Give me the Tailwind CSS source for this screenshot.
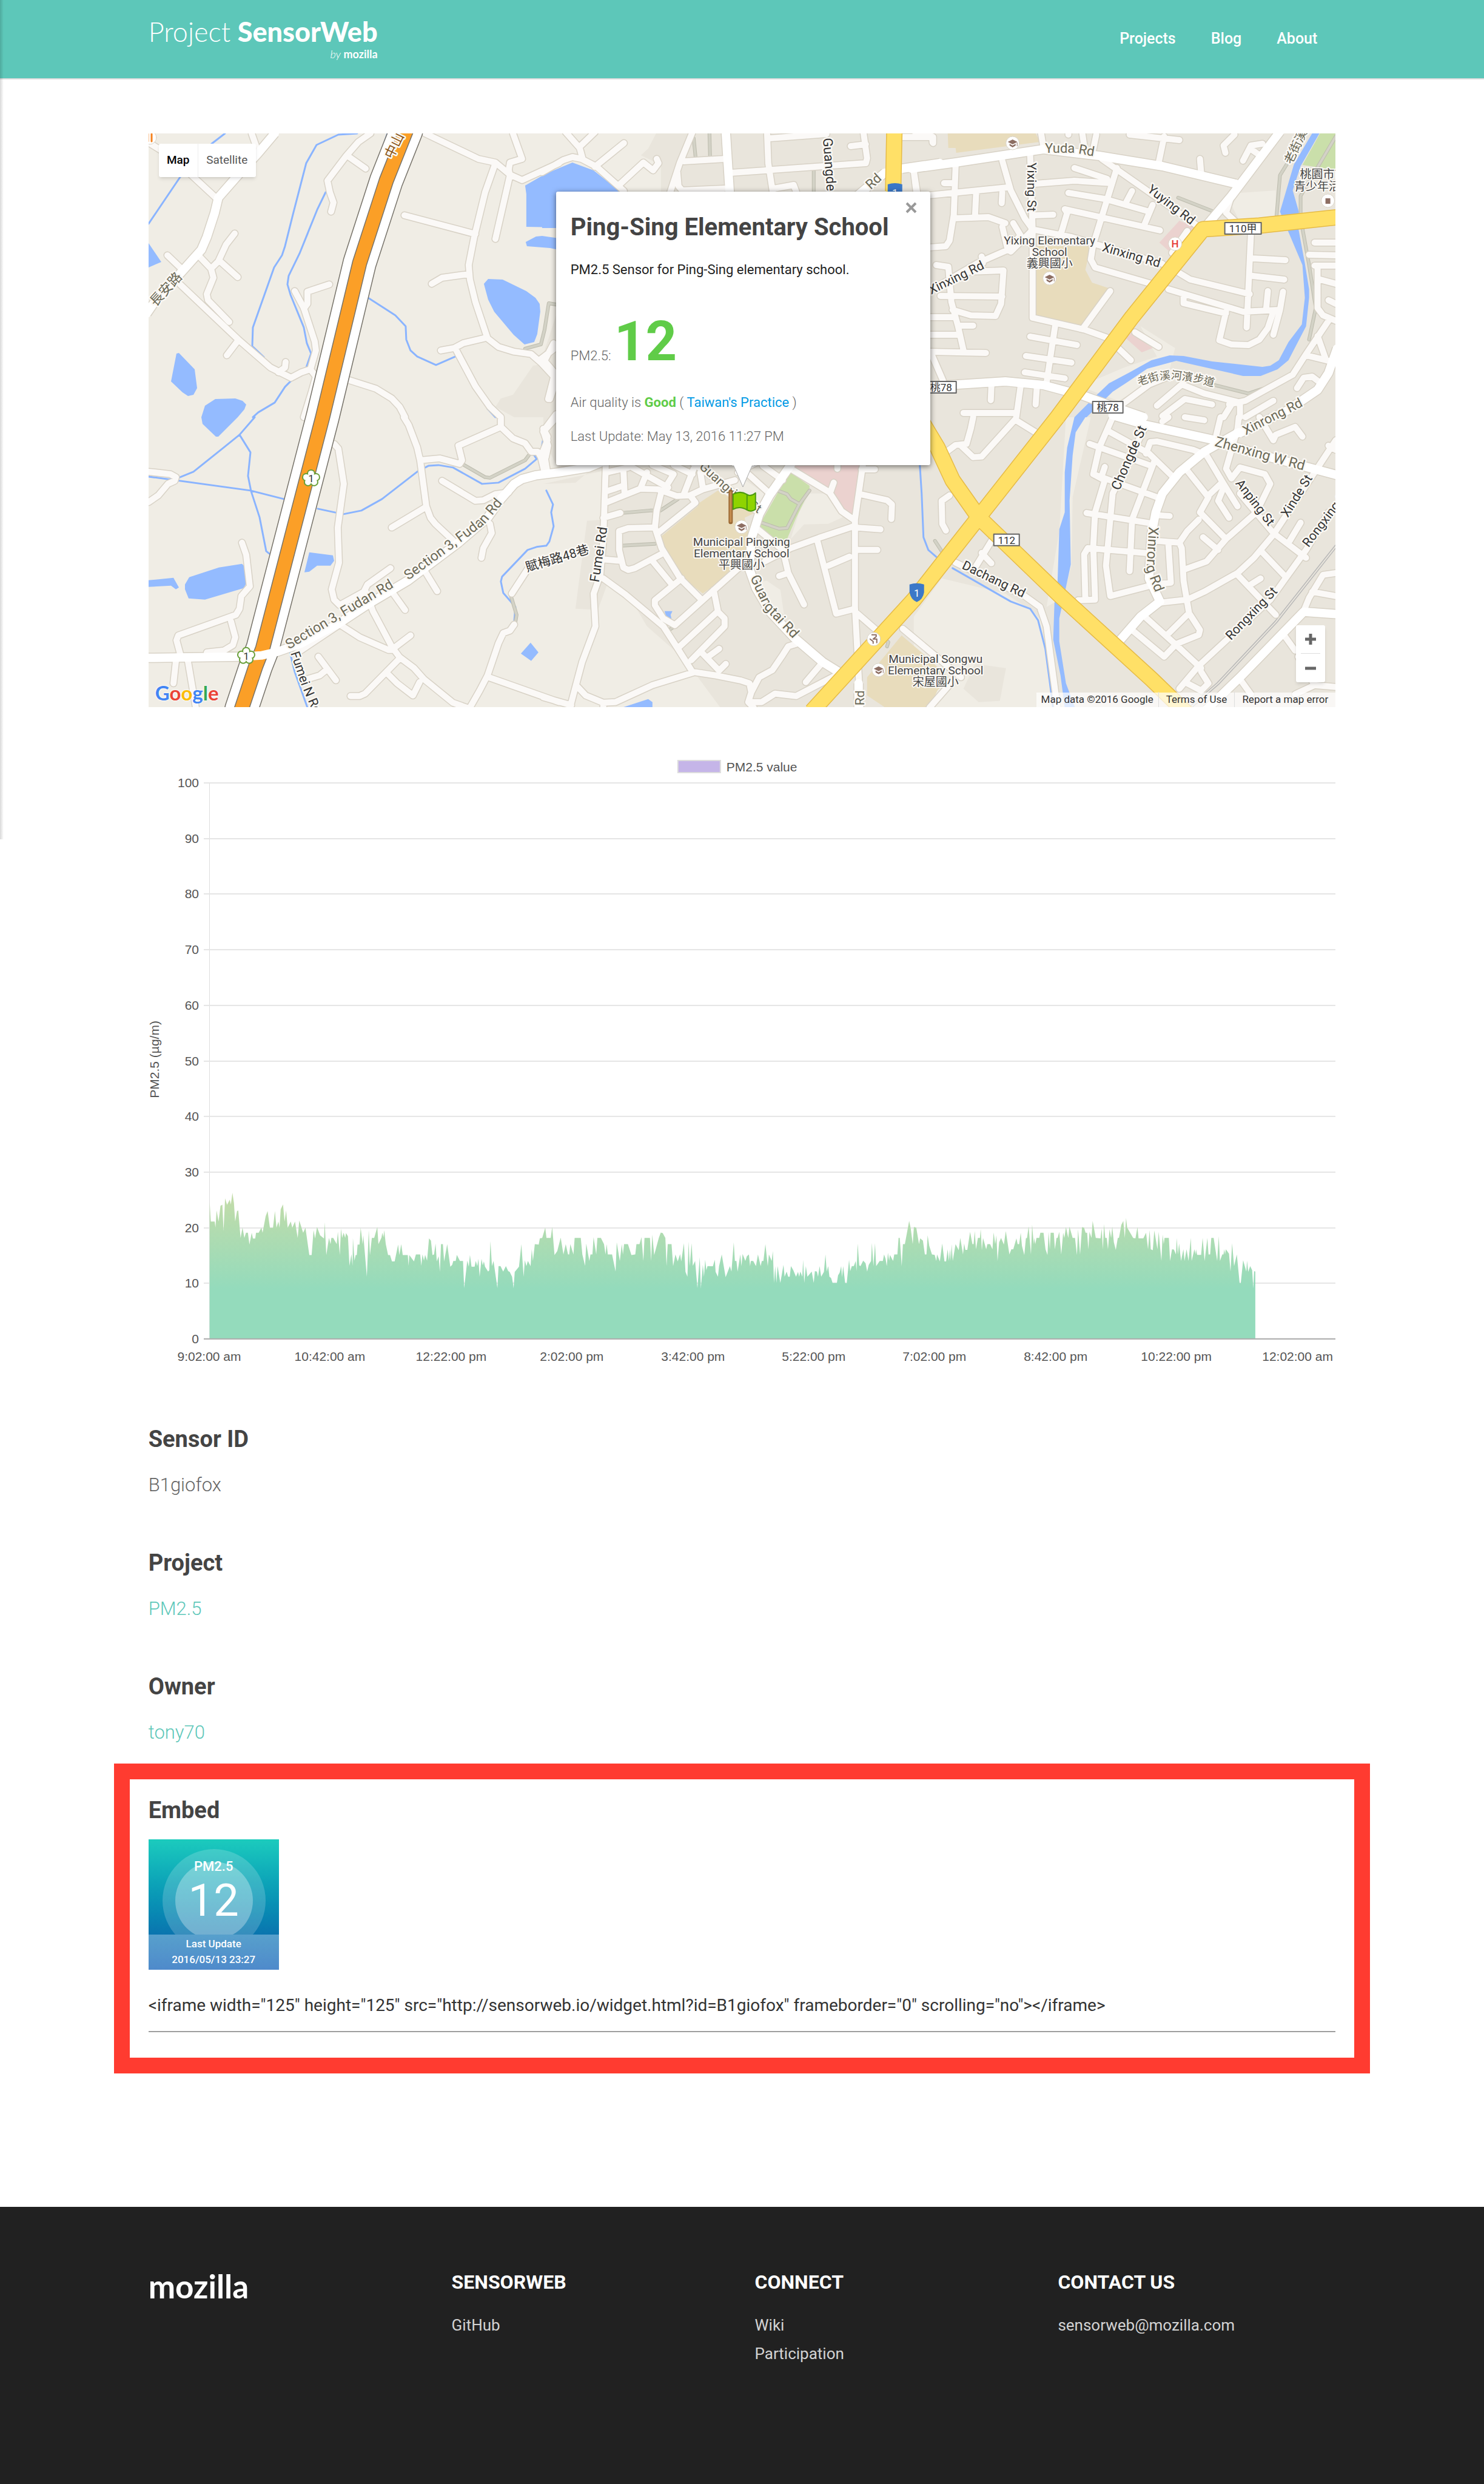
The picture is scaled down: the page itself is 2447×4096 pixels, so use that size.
<!DOCTYPE html>
<html lang="en">
<head>
<meta charset="utf-8">
<meta name="viewport" content="width=device-width, initial-scale=1">
<title>Ping-Sing Elementary School - Project SensorWeb</title>
<script src="https://cdn.jsdelivr.net/npm/@tailwindcss/browser@4"></script>
</head>
<body class="relative flex min-h-screen flex-col bg-white font-['Roboto','Noto_Sans_CJK_TC',sans-serif] text-[#444]">
<div class="absolute top-0 left-0 z-10 h-[1384px] w-1.5 bg-linear-to-r from-black/15 to-transparent" aria-hidden="true"></div>

<header class="border-b-2 border-[#dcdcdc] bg-[#5dc7b9] text-white">
  <div class="mx-auto flex h-[129px] w-4/5 items-start justify-between">
    <a href="#" class="flex flex-col items-end pt-6 font-['Lato',sans-serif]">
      <span class="text-[45px] leading-[56px]"><span class="font-light">Project</span> <span class="font-black">SensorWeb</span></span>
      <span class="text-[18px] leading-[18px]"><i class="font-light">by</i> <b>mozilla</b></span>
    </a>
    <nav class="flex gap-[58px] pt-11 pr-[30px] text-[25px] leading-10 font-medium">
      <a href="#">Projects</a>
      <a href="#">Blog</a>
      <a href="#">About</a>
    </nav>
  </div>
</header>

<main class="mx-auto w-4/5 pt-[89px]">
  <section class="relative overflow-hidden" aria-label="Map">
    <svg id="map" class="block h-auto w-full bg-[#f0ede5] font-['Roboto','Noto_Sans_CJK_TC',sans-serif]" viewBox="0 0 1958 946" fill="none" stroke-linejoin="round" stroke-linecap="round"></svg>

    <div class="absolute top-[17px] left-[17px] flex h-[55px] rounded-[3px] bg-white text-[19px] shadow-md">
      <button class="w-[65px] border-r border-[#eee] font-medium text-black">Map</button>
      <button class="w-[95px] text-[#565656]">Satellite</button>
    </div>

    <div class="absolute top-[96px] left-[672px] h-[451px] w-[617px] rounded-[3px] bg-white px-6 shadow-[0_2px_10px_rgba(0,0,0,0.55)]">
      <button aria-label="Close" class="absolute top-[17px] right-[22px]">
        <svg class="size-[19px]" viewBox="0 0 19 19" fill="none" stroke="#999" stroke-width="4"><path d="M2 2 17 17M17 2 2 17"/></svg>
      </button>
      <h1 class="pt-[34px] text-[40px] leading-[50px] font-bold">Ping-Sing Elementary School</h1>
      <p class="mt-[29px] text-[22px] leading-8 text-[#222]">PM2.5 Sensor for Ping-Sing elementary school.</p>
      <p class="mt-[50px] text-[22px] leading-[106px] font-light text-[#666]">PM2.5: <strong class="text-[90px] font-bold text-[#60cc48]">12</strong></p>
      <p class="mt-2 text-[22px] leading-8 font-light text-[#666]">Air quality is <b class="font-bold text-[#60cc48]">Good</b> ( <a href="#" class="font-normal text-[#039be5]">Taiwan's Practice</a> )</p>
      <p class="mt-6 text-[22px] leading-8 font-light text-[#666]">Last Update: May 13, 2016 11:27 PM</p>
      <svg class="absolute top-[450px] left-[290px] h-[40px] w-9" viewBox="0 0 36 40"><path d="M2 0 18 37 34 0z" fill="#fff" stroke="#aaa"/><path d="M0 0H36" stroke="#fff" stroke-width="3"/></svg>
    </div>

    <div class="absolute right-[17px] bottom-[41px] flex h-[94px] w-12 flex-col items-center rounded-[3px] bg-white shadow-md">
      <button aria-label="Zoom in" class="flex flex-1 items-center"><svg class="size-[18px]" viewBox="0 0 18 18" stroke="#666" stroke-width="5"><path d="M0 9H18M9 0V18"/></svg></button>
      <div class="h-px w-8 bg-[#ddd]"></div>
      <button aria-label="Zoom out" class="flex flex-1 items-center"><svg class="size-[18px]" viewBox="0 0 18 18" stroke="#666" stroke-width="5"><path d="M0 9H18"/></svg></button>
    </div>

    <div class="absolute right-0 bottom-0 flex h-6 items-center bg-white/70 text-[17px] text-[#333]">
      <span class="px-2">Map data ©2016 Google</span>
      <a href="#" class="border-l border-[#ddd] px-3">Terms of Use</a>
      <a href="#" class="border-l border-[#ddd] px-3">Report a map error</a>
    </div>
    <div class="absolute bottom-0 left-[11px] font-['Lato',sans-serif] text-[33px] leading-[48px] font-bold [text-shadow:0_0_3px_white,0_0_3px_white]"><span class="text-[#4285f4]">G</span><span class="text-[#ea4335]">o</span><span class="text-[#fbbc05]">o</span><span class="text-[#4285f4]">g</span><span class="text-[#34a853]">l</span><span class="text-[#ea4335]">e</span></div>
  </section>

  <svg id="chart" class="mt-[74px] block h-auto w-full font-['Liberation_Sans',sans-serif] text-[21px]" viewBox="0 0 1958 1020" fill="#555" role="img" aria-label="PM2.5 value by time"></svg>

  <section class="mt-[88px]">
    <h2 class="text-[38px] leading-[50px] font-bold">Sensor ID</h2>
    <p class="mt-[29px] text-[31px] leading-[44px] font-light text-[#666]">B1giofox</p>
  </section>
  <section class="mt-[81px]">
    <h2 class="text-[38px] leading-[50px] font-bold">Project</h2>
    <p class="mt-[29px] text-[31px] leading-[44px] font-light"><a href="#" class="text-[#5dc7b9]">PM2.5</a></p>
  </section>
  <section class="mt-[81px]">
    <h2 class="text-[38px] leading-[50px] font-bold">Owner</h2>
    <p class="mt-[29px] text-[31px] leading-[44px] font-light"><a href="#" class="text-[#5dc7b9]">tony70</a></p>
  </section>

  <section class="-mx-[57px] mt-[29px] border-[26px] border-[#ff3b30] px-[31px] pt-[26px] pb-[42px]">
    <h2 class="text-[38px] leading-[50px] font-bold"><label for="embed">Embed</label></h2>
    <div class="relative mt-[23px] flex size-[215px] flex-col items-center overflow-hidden bg-linear-to-b from-[#1ccbbd] to-[#0b72ae] to-75% text-white">
      <svg class="absolute inset-0 size-full" viewBox="0 0 215 215"><circle cx="108" cy="101" r="85" fill="#fff" fill-opacity=".18"/><circle cx="108" cy="101" r="64" fill="#fff" fill-opacity=".3"/></svg>
      <span class="relative pt-[31px] text-[22px] leading-7 font-medium">PM2.5</span>
      <span class="relative text-[74px] leading-[84px]">12</span>
      <p class="absolute inset-x-0 bottom-0 h-[58px] bg-linear-to-b from-[#57a0cc] to-[#4f8acb] pt-[2px] text-center text-[17px] leading-[26px] font-medium">Last Update<br>2016/05/13 23:27</p>
    </div>
    <input id="embed" readonly class="mt-[17px] block h-[86px] w-full border-b-2 border-[#9e9e9e] text-[28px] text-[#333] outline-none" value="&lt;iframe width=&quot;125&quot; height=&quot;125&quot; src=&quot;http://sensorweb.io/widget.html?id=B1giofox&quot; frameborder=&quot;0&quot; scrolling=&quot;no&quot;&gt;&lt;/iframe&gt;">
  </section>
</main>

<footer class="mt-[220px] flex-1 bg-[#212121] pt-[104px] text-[#d3d3d3]">
  <div class="mx-auto grid w-4/5 grid-cols-4 gap-[42px] text-[26px] leading-[47px]">
    <a href="#" class="font-['Lato',sans-serif] text-[53px] leading-[54px] font-bold text-white">mozilla</a>
    <div>
      <h3 class="mb-7 text-[32px] leading-10 font-bold text-white">SENSORWEB</h3>
      <a href="#">GitHub</a>
    </div>
    <div>
      <h3 class="mb-7 text-[32px] leading-10 font-bold text-white">CONNECT</h3>
      <ul><li><a href="#">Wiki</a></li><li><a href="#">Participation</a></li></ul>
    </div>
    <div>
      <h3 class="mb-7 text-[32px] leading-10 font-bold text-white">CONTACT US</h3>
      <a href="#">sensorweb@mozilla.com</a>
    </div>
  </div>
</footer>

<script>
const K = 0.861;
const pairs = s => s.trim().split(/\s+/).map(p => p.split(',').map(Number));
// Map sheets: origin and cells per unit, so each part of town is digitised on its own grid.
const sheets = {
  A: [270, 240, 1.96, 2.8], B: [270, 800, 1.96, 2.751], C: [1040, 800, 1.96, 2.751],
  P: [1040, 340, 2.063, 2.8], T: [1040, 250, 2.063, 3], E: [1750, 240, 1.889, 2.8], D: [1750, 800, 1.889, 2.751]
};
const at = (s, [x, y]) => { const [ox, oy, sx, sy] = sheets[s]; return [Math.round((ox + x / sx - 284) * K), Math.round((oy + y / sy - 256) * K)]; };
const line = (s, str) => 'M' + pairs(str).map(p => at(s, p).join(' ')).join('L');
const lines = o => Object.entries(o).map(([s, l]) => l.split('|').map(t => line(s, t)).join('')).join('');
const areas = (o, fill) => `<path d="${Object.entries(o).map(([s, l]) => l.split('|').map(t => line(s, t) + 'Z').join('')).join('')}" fill="${fill}"/>`;
const strokes = (d, color, w, cap = 'round') => `<path d="${d}" stroke="${color}" stroke-width="${w}" stroke-linecap="${cap}"/>`;

const urban = { A: '1470,1290 1568,1270 1568,1568 1400,1568 1330,1510 1350,1465 1395,1445',
  P: '0,950 60,700 520,200 465,0 1568,0 1568,1568 60,1568 0,1400',
  T: '445,18 1568,18 1568,390 465,390 465,200 385,145 415,105',
  C: '0,350 120,345 200,250 1568,250 1568,1528 665,1528 580,1370 500,1240 390,1100 330,960 240,885 205,1015 120,1010 165,545 228,540 228,280',
  E: '-60,45 1530,45 1530,1568 -60,1568', D: '-60,0 1530,0 1530,1528 -60,1528' };
const rural = { C: '1000,400 1070,400 1150,500 1120,530 1070,560 980,565 930,640 960,500|790,870 840,860 890,910 905,1040 830,960|670,380 750,320 830,400 800,500 750,530',
  E: '1180,365 1310,350 1310,500 1180,520 1150,430|820,1080 945,1195 925,1310 840,1390 740,1480 600,1400 760,1300 880,1240',
  D: '0,1050 100,850 330,930 430,1020 460,1070 500,1528 0,1528|550,0 640,0 575,420 570,780 540,950 480,1000 525,600' };
const tan = { C: '655,385 800,500 755,530 770,600 770,760 735,790 600,930 515,835 440,655 440,630 580,470 580,455|1345,1150 1440,1260 1520,1370 1480,1440 1450,1528 1285,1528 1215,1465 1215,1370',
  E: '122,45 440,45 455,90 152,148 150,122 125,122|445,650 640,650 620,775 645,845 703,875 605,1083 440,1028' };
const green = { C: '930,290 1000,360 1000,385 950,530 915,640 900,700 870,690 805,580 880,400', E: '1470,45 1526,45 1526,240 1405,215' };
const pink = { C: '940,255 1200,250 1185,290 1160,510 1120,480 1070,390 1000,310', E: '960,512 1020,550 925,680 888,630|785,1115 865,1195 825,1220 765,1140' };
const lakes = { A: '27,635 75,735 27,765|132,1225 142,1222 200,1310 210,1410 195,1448 175,1452 155,1435 112,1375|225,1568 240,1505 278,1470 352,1465 380,1480 395,1500 388,1525 362,1568 290,1670 280,1670 230,1603|1440,325 1500,275 1568,235 1568,550 1445,545 1445,370|1443,628 1482,597 1505,594 1600,615 1600,680 1535,660 1447,650|1303,826 1358,828 1445,890 1480,925 1495,960 1498,1000 1487,1120 1475,1165 1438,1175 1398,1125 1325,1000 1302,935 1287,852',
  T: '-5,257 115,185 200,230 320,370 320,560 -5,560',
  B: '630,712 720,728 725,755 710,782 660,782 630,812 612,816|180,842 292,790 378,772 385,780 393,875 385,900 240,960 178,955 165,905 165,880|27,858 120,844 142,898 130,905 112,887 27,895|1462,1188 1491,1240 1463,1284 1425,1244',
  C: '455,1020 485,1022 478,1040 482,1068 460,1045|295,1528 395,1485 410,1500 410,1528',
  E: '1440,45 1375,210 1325,465 1350,560 1405,750 1415,925 1403,1070 1355,1165 1320,1260 1290,1290 1260,1297 1080,1268 975,1238 925,1236 860,1262 780,1325 705,1385 660,1450 580,1568 625,1568 720,1430 770,1380 845,1305 950,1265 1190,1347 1255,1347 1315,1310 1355,1260 1418,1080 1430,925 1430,880 1415,740 1390,550 1393,465 1370,350 1400,220 1467,45',
  D: '580,0 555,160 545,290 545,500 525,590 520,880 508,980 505,1170 530,1360 545,1528 583,1528 550,1400 525,1180 527,1060 567,775 563,440 575,200 585,80 620,0' };
const streams = { A: '315,45 265,100 145,280 27,530|810,45 740,50 657,108 620,205 570,480 540,650 528,700 498,765 418,1085 416,1185 460,1245|925,45 880,220 840,400 765,770|693,360 660,455 595,690 553,810 549,855 560,910 610,1085 622,1170 637,1225 620,1300 560,1375 540,1405 502,1490 440,1540 420,1568|852,925 955,1020 992,1080 995,1150 1010,1210 1035,1240 1107,1288 1180,1240|1300,1520 1330,1568',
  B: '425,0 370,90 310,160 195,285 135,320|27,313 410,385 535,430|370,90 410,185 401,310 412,390 445,525 468,705 480,718|663,480 758,510 827,490 905,430 1035,285 1080,255 1115,250 1170,265 1280,350 1340,343 1440,270 1485,220 1470,190|1510,110 1503,165|1520,385 1545,460 1540,500 1549,575 1533,655 1520,677 1485,683 1450,697 1355,840 1350,865 1360,925 1405,1000 1400,1075|558,1235 575,1340 625,1528',
  C: '1413,250 1420,400 1428,630 1445,700 1480,740', D: '140,795 350,970 420,1010 450,1070 475,1220 505,1528' };
const minor = { A: '27,95 100,160 190,270 285,395|415,45 430,110|860,45 815,90 770,165 700,300 707,360 722,415 712,465|775,165 842,235|98,700 150,770|215,700 262,770 290,730 318,640 350,580|295,730 362,815|262,770 270,820 245,905 250,940 330,1055|145,855 365,1150 485,1300 563,1355 600,1325 635,1310 655,1210 652,1160 610,980 577,890|365,1155 320,1235|515,1325 540,1300 542,1270|705,855 625,895 623,960 610,985|635,1310 655,1350 640,1430 610,1568|1065,45 1265,180 1330,200 1385,265 1430,295 1568,205|1395,45 1430,180 1385,200 1380,240 1385,270 1330,610|1330,205 1290,360 1250,600 1230,750 1235,830 1255,950 1300,1145 1340,1190 1400,1215 1465,1230 1500,1275 1560,1365 1535,1470|987,485 1255,585|1230,800 1130,820 1090,850|1295,1140 1210,1170 1175,1195 1125,1210|1180,1200 1255,1400 1310,1510 1350,1568|775,1365 880,1415 940,1465 970,1510 990,1568|1500,1255 1568,1180',
  T: '-5,240 80,172 115,155 150,165 210,210 320,350|90,10 143,100 155,165|205,10 143,95|205,210 318,75|300,315 395,185 435,232 455,190 448,165|590,10 540,190 500,360|555,178 720,165|530,240 535,320 550,345 715,335|740,245 1275,190 1280,160 1265,10|885,10 890,190 910,390|895,45 1120,22|1215,90 1275,80|910,335 990,315 1010,390|1418,40 1540,40 1540,75|1465,230 1480,390',
  B: '27,285 110,298 130,315 125,335 100,350 65,410 27,445|725,140 740,165 760,350 737,580 742,765 715,905 725,960 745,990 835,920 850,880 935,795|377,660 395,725 407,890 375,940 370,1010 355,1040 140,1150 133,1175 145,1245|338,1075 352,1160 345,1200 310,1230 245,1240|120,1400 130,1285|175,1285 205,1528|985,0 1005,40 1035,160 1048,230 1070,470 1085,530 1105,560 1180,660|1048,225 1120,215 1195,245 1205,225 1190,150 1350,50 1395,110 1440,135 1465,180 1490,180 1500,210 1515,290|1350,50 1350,0|1560,0 1510,75 1525,120 1500,205|1130,335 1255,440 1285,435 1330,405 1380,395|1065,475 940,580|1310,560 1315,610 1285,690 1278,740|1060,800 1110,915|945,925 990,1015|840,910 870,1020 945,1220 1010,1150|750,1095 820,1160 930,1225 950,1225 970,1265 1025,1320 1060,1380 1170,1505 1235,1535|970,1270 840,1455 820,1467 785,1468|925,1350 960,1400 1020,1465 1045,1395|665,1260 730,1385|695,1330 670,1360 625,1380|580,1245 745,1090|1455,790 1390,930|1400,1090 1385,1125 1360,1135 1340,1190 1300,1360 1270,1440 1235,1528|1305,1370 1568,1500',
  P: '40,890 5,985 45,1050 20,1190|50,1270 0,1360 20,1440 10,1500',
  C: '0,60 15,100 5,200 15,300|235,250 225,640 215,830 190,930 195,1100 145,1290 120,1420 100,1528|235,450 365,375 430,378 500,415 550,410 600,380 720,330|300,270 305,400|240,390 300,360|240,290 320,265|330,260 470,370|390,290 365,375|455,375 490,300 410,250|565,270 525,410|490,250 560,300|590,290 600,370|445,390 425,490 420,580 445,690 515,850 595,960|550,410 572,450 430,610|225,530 290,505|420,580 320,585 285,600 285,700 300,790 320,805 345,795 450,715|235,750 290,755|410,755 485,885|520,850 420,965 420,990 450,1060 495,1095 650,900 735,790|225,850 310,935 450,1100 500,1210 560,1340 650,1360 740,1385 775,1400 780,1450 770,1500 790,1528|565,1345 410,1410 270,1500 225,1505 160,1465 125,1415|0,1475 105,1515|225,1505 225,1528|640,910 655,1020 510,1210|655,1025 680,1060 680,1100 555,1280|600,1245 660,1335 685,1300|620,1260 660,1220|770,1500 820,1500 870,1455 930,1465 950,1470 1110,1350|780,1450 810,1370 860,1330 900,1250 920,1205 950,1195|1050,1290 985,1395|560,240 700,380 800,490|770,300 840,390|825,255 900,330|730,290 800,240|930,270 1075,395 1120,495 1165,540|1105,250 1105,270|1090,345 1080,390|1200,250 1170,540 1170,1000 1190,1528|1195,275 1245,275|1190,405 1290,435 1310,460 1307,535|1175,580 1265,590|1175,700 1255,700|1165,575 1035,635 930,690 830,760|805,590 900,700 920,820 980,985|920,820 885,835|1030,650 1100,1035 1170,1010|1070,780 1150,735|1180,1035 1265,1140|1350,1115 1568,1370|1450,1528 1530,1400',
  E: '57,375 340,335|0,62 65,60 67,95|0,250 8,355|150,220 145,480 130,620 115,650 57,655|110,310 145,310|225,355 222,490|145,500 270,495 330,525|320,190 350,350 400,500 430,560|320,360 318,420|460,45 470,120|610,45 615,110|558,50 558,40|660,50 650,130|420,165 430,560 430,1035 620,1100 700,1140|440,485 505,480|425,560 570,600 900,745|545,450 890,565|545,450 555,470 530,590|440,315 580,300 715,310|580,230 700,290|735,230 650,640 640,720 655,765 860,850|560,365 690,395 845,460|790,355 770,410|865,430 835,530|680,180 1025,540|780,50 960,80|905,60 885,200|1160,50 1120,110 1128,150|1260,100 1220,110 1190,190|1220,130 1255,165|1035,180 1040,260|1145,400 1130,470 1165,520|1220,590 1205,1085|1225,715 1345,725|1225,810 1340,828|955,790 1000,830 1215,905|920,880 1190,1000 1320,990|975,910 975,955 1130,1010|1280,890 1275,990|1335,895 1325,990 1300,1125|1130,1000 1105,1155 1150,1175 1210,1180 1250,1150 1280,1090 1300,1000|360,525 385,590 340,670 230,740 57,890|320,545 340,670|425,570 350,680|990,570 935,685|80,750 125,760 135,950 160,1080 180,1210|245,705 250,740|200,785 325,780 315,960 295,1025 205,1020 140,990|95,915 320,920|57,1030 140,1030|165,1075 215,1075|57,1125 160,1125|57,1215 260,1222|60,1220 105,1370|710,890 610,1095|510,1080 480,1380|420,1135 590,1180|405,1238 570,1275|400,1325 545,1358|280,1400 278,1475|385,1405 370,1568|445,1405 440,1500|180,1545 370,1545|740,1200 785,1260|800,1110 885,1190|1450,630 1526,630|1430,695 1526,700|1450,755 1526,755|1460,755 1460,980 1480,1020 1526,1050|1470,830 1526,850|1500,940 1526,960|1500,1050 1420,1230 1370,1340 1200,1480 1140,1500|1420,1235 1500,1265|1460,1130 1490,1250|1385,1410 1410,1355 1440,1350 1470,1380|880,1505 970,1390 1050,1440 1180,1490 1180,1568|900,1560 980,1470 1080,1500|1150,1500 1120,1568|1300,1480 1200,1568|740,1510 850,1390 920,1350',
  D: '215,0 205,60 190,140 150,145 110,190|170,150 215,210 245,205 365,10 440,80|130,410 100,440 102,560 115,595|285,640 225,780|245,715 280,770|150,765 400,940 455,1000 480,1100 520,1528|720,0 670,160 650,300 690,330 655,500 650,680 655,960 595,965|635,140 850,250|700,70 850,190 935,310|840,40 720,400 695,780 710,940 870,880 930,870 920,670|870,230 790,540 780,810|650,300 885,425|690,260 680,310|625,505 870,560|890,515 925,520|630,690 835,715|630,690 615,720 620,960|840,190 855,130 880,125 1010,170 1060,200 1120,350 1170,470|990,280 1065,420 1035,500 1130,640|1110,350 1065,410|1120,370 1100,440 1140,530|1150,320 1180,265 1270,300 1290,350 1240,500 1130,640 1060,760 980,800|1150,320 1130,270 1170,60 1175,0|1110,0 1095,90|980,0 1050,15|900,20 920,0|1250,0 1300,120 1310,90 1380,50 1405,100|1500,150 1526,170|1526,120 1450,290 1300,620 1230,740 1170,820 1050,920 990,960 890,975|875,650 960,660 970,690 975,860 995,1030 1035,1120 1030,1145 950,1195|960,660 990,600 1030,540|1045,630 1100,700|1180,400 1300,610 1420,740|1400,555 1360,650|1260,710 1345,840|1500,500 1420,700 1345,850 1290,960 1150,1150 1030,1310 960,1430|1170,830 1310,1040|1255,850 1220,880|835,1050 950,1200 1040,1320|995,1030 915,1150|790,1120 905,1260 950,1195|1040,1340 1065,1400 1040,1440 990,1400|1526,820 1480,830 1430,950 1410,1020|1440,920 1526,940|1340,1150 1380,1230|1180,1380 1220,1460|1380,1460 1450,1410 1526,1420|1390,1260 1450,1410' };
const paths = { A: '1440,1200 1500,1175 1515,1100 1530,955 1568,965', B: '1205,245 1290,315 1310,318 1440,225 1455,200|1387,935 1410,1040 1405,1080',
  T: '595,45 602,150|656,18 658,148|1068,232 1068,390',
  C: '295,505 400,490 440,490 505,430|295,675 420,665|880,385 915,405 930,430 960,455|1000,385 960,460 915,585 885,588 820,555|1470,650 1500,715|1265,1150 1295,1185 1290,1205|470,1125 490,1105',
  E: '1370,160 1325,270 1312,500|1526,60 1400,380 1400,500 1430,750 1455,980 1430,1150|1080,1390 1210,1440 1310,1390|955,388 1080,460' };
const major = { A: '500,45 440,150 370,260 290,390 275,470 245,600 225,670 150,790 60,930 20,1010',
  T: '722,10 738,390|1418,220 1568,190|1350,245 1230,390',
  C: '930,250 850,410 810,510 780,640 775,800 800,900 850,1020 940,1160 1050,1290 1140,1370|1185,1400 1185,1528',
  B: '20,1268 380,1262 450,1255 510,1235 600,1190 750,1080 850,985 1000,860 1190,660 1300,530 1350,430 1400,350 1430,325 1480,305 1568,290 1680,265 1740,230',
  E: '-10,232 150,200 470,130 670,165 900,220 1165,315|1325,35 1150,380 1055,545|57,1400 330,1375 470,1395 560,1430|610,1450 760,1530 830,1568|1530,1200 1500,1330 1460,1420 1350,1530 1180,1650',
  D: '720,-10 840,40 1090,120 1240,190 1535,305|1175,80 1050,180 960,290 900,400 875,500 860,620 850,850 890,970 820,1050 745,1175|1535,1037 1410,1025 1180,1370 1060,1540' };
const motorway = { A: '995,30 920,300 820,740 680,1568', B: '680,0 455,1220 430,1310 375,1540' };
const yellow = { T: '1388,5 1383,350', D: '-370,1550 0,960 235,525 520,0|20,0 85,160 140,330 235,525 530,940 860,1380 990,1560', E: '520,1568 790,1030 1045,560 1250,540 1535,493' };

const labels = [
  ['B', '550,1225 850,975 955,890', 'Section 3, Fudan Rd', 23, '#6b6856'], ['B', '1000,860 1180,680 1290,560 1360,450', 'Section 3, Fudan Rd', 23, '#6b6856'],
  ['B', '568,1270 600,1410 640,1540', 'Fumei N Rd', 21, '#333'], ['A', '55,975 155,820', '長安路', 22, '#6b6856'], ['A', '945,180 985,60', '中山', 22, '#8a5417'],
  ['B', '1470,805 1663,725', '賦梅路48巷', 21, '#333'], ['C', '210,860 240,590', 'Fumei Rd', 22, '#333'],
  ['C', '590,275 700,410 800,500', 'Guangxing St', 21, '#6b6856'], ['C', '775,840 830,1010 940,1170', 'Guangtai Rd', 23, '#6b6856'],
  ['T', '1105,35 1120,320 1125,450', 'Guangde St', 22, '#333'], ['T', '1290,350 1345,275', 'Rd', 22, '#6b6856'], ['C', '1205,1520 1205,1435', 'Rd', 21, '#6b6856'],
  ['E', '470,150 580,150 655,168', 'Yuda Rd', 22, '#6b6856'], ['E', '410,200 410,465', 'Yixing St', 21, '#333'], ['E', '840,350 1005,540', 'Yuying Rd', 21, '#333'],
  ['E', '680,675 885,765', 'Xinxing Rd', 21, '#333'], ['E', '65,905 255,770', 'Xinxing Rd', 21, '#333'], ['E', '820,1395 880,1368 940,1362 1010,1376 1080,1402', '老街溪河濱步道', 18, '#6b6856'],
  ['E', '1370,200 1418,50', '老街溪', 20, '#6b6856'], ['E', '1190,1670 1420,1500', 'Xinrong Rd', 22, '#6b6856'],
  ['D', '745,380 840,65', 'Chongde St', 22, '#333'], ['D', '1085,150 1410,280', 'Zhenxing W Rd', 23, '#6b6856'], ['D', '1160,345 1285,580', 'Anping St', 21, '#333'],
  ['D', '1350,535 1445,315', 'Xinde St', 21, '#333'], ['D', '850,570 842,800 875,930', 'Xinrong Rd', 23, '#6b6856'], ['D', '1145,1180 1320,915', 'Rongxing St', 21, '#333'],
  ['D', '1435,675 1570,415', 'Rongxing St', 21, '#333'], ['D', '170,795 395,950', 'Dachang Rd', 21, '#333']
];
const label = ([s, str, text, size, color], i) => {
  const p = pairs(str).map(q => at(s, q)), ext = (a, b) => { const l = Math.hypot(b[0] - a[0], b[1] - a[1]); return [b[0] + (b[0] - a[0]) / l * 60, b[1] + (b[1] - a[1]) / l * 60]; };
  p.unshift(ext(p[1], p[0])); p.push(ext(p[p.length - 2], p[p.length - 1]));
  return `<path id="t${i}" d="M${p.map(q => q.map(Math.round).join(' ')).join('L')}"/><text font-size="${size}" fill="${color}" stroke="#faf8f4" stroke-width="5" paint-order="stroke" text-anchor="middle"><textPath href="#t${i}" startOffset="50%">${text}</textPath></text>`;
};
const block = (s, x, y, rows, step = 23) => { const [X, Y] = at(s, [x, y]); return `<text font-size="19" fill="#444" stroke="#faf8f4" stroke-width="4" paint-order="stroke" text-anchor="middle">${rows.map((r, i) => `<tspan x="${X}" y="${Y + i * step}">${r}</tspan>`).join('')}</text>`; };
const shield = (s, x, y, w, text) => { const [X, Y] = at(s, [x, y]); return `<rect x="${X - w / 2}" y="${Y - 9}" width="${w}" height="19" fill="#fff" stroke="#666" stroke-width="2"/><text x="${X}" y="${Y + 7}" font-size="17" fill="#333" text-anchor="middle">${text}</text>`; };
const poi = (s, x, y, glyph) => { const [X, Y] = at(s, [x, y]); return `<g transform="translate(${X} ${Y})"><circle r="11" fill="#fff" stroke="#d8d2c6"/>${glyph}</g>`; };
const cap = '<path d="M-8-2 0-6 8-2 0 2ZM-5 1 0 4 5 1V4L0 7-5 4ZM7-1H8V5H7Z" fill="#8d6e63"/>';
const flower = (s, x, y) => { const [X, Y] = at(s, [x, y]); const c = [0, 1, 2, 3, 4].map(i => { const a = (i * 72 - 90) * Math.PI / 180; return [Math.round(8 * Math.cos(a)), Math.round(8 * Math.sin(a))]; }); const petals = r => c.map(q => `<circle cx="${q[0]}" cy="${q[1]}" r="${r}"/>`).join(''); return `<g transform="translate(${X} ${Y})"><g fill="#689f38">${petals(7)}</g><g fill="#fff">${petals(5)}<circle r="7"/></g><text y="6" font-size="17" fill="#333" text-anchor="middle">1</text></g>`; };
const blueShield = (s, x, y) => { const [X, Y] = at(s, [x, y]); return `<g transform="translate(${X} ${Y})"><path d="M-12-13Q0-17 12-13V0Q10 12 0 16 -10 12-12 0Z" fill="#3b78c8"/><text y="7" font-size="17" fill="#fff" text-anchor="middle">1</text></g>`; };

const dMinor = lines(minor), dMajor = lines(major), dMotor = lines(motorway), dYellow = lines(yellow), dPath = lines(paths);
const rail = lines({ D: '1526,680 1310,1080 1100,1400 1000,1528' });
const [fx, fy] = at('C', [703, 390]);
document.getElementById('map').innerHTML =
  areas(urban, '#e9e5dc') + areas(rural, '#f0ede5') + areas({ D: '180,1430 235,1500 310,1495 333,1320 220,1300' }, '#e9e5dc') + areas(tan, '#e8dcbc') + areas(green, '#cadfaa') + areas(pink, '#ebd2cf') +
  areas(lakes, '#94bbff') + strokes(lines(streams), '#8ab4ff', 3) +
  strokes(dPath, '#bdbcae', 6) + strokes(dPath, '#d3d2c6', 4) + strokes(rail, '#b8b8b8', 5) + strokes(rail, '#e9e5dc', 2) +
  strokes(dMinor, '#d8d2c6', 13) + strokes(dMajor, '#d8d2c6', 17, 'butt') + strokes(dMinor, '#fbf9f7', 10) +
  strokes(dMotor, '#77736a', 56) + strokes(dMotor, '#fff', 53) + strokes(dMotor, '#77736a', 25) + strokes(dMotor, '#fb9f27', 22) +
  strokes(dMajor, '#fff', 14) + strokes(dYellow, '#e6bb47', 27, 'butt') + strokes(dYellow, '#ffe067', 24) +
  labels.map(label).join('') +
  block('C', 745, 675, ['Municipal Pingxing', 'Elementary School', '平興國小'], 19) + block('C', 1474, 1292, ['Municipal Songwu', 'Elementary School', '宋屋國小'], 19) +
  block('E', 490, 640, ['Yixing Elementary', 'School', '義興國小'], 19) + block('E', 1480, 285, ['桃園市市', '青少年活動'], 20) +
  shield('E', 1190, 552, 60, '110甲') + shield('E', 98, 1403, 50, '桃78') + shield('E', 701, 1510, 50, '桃78') + shield('D', 335, 645, 42, '112') +
  flower('B', 637, 320) + flower('B', 394, 1258) + blueShield('C', 1403, 922) + blueShield('T', 1390, 355) +
  poi('C', 745, 578, cap) + poi('C', 1260, 1332, cap) + poi('E', 490, 822, cap) + poi('E', 357, 98, cap) +
  poi('C', 1240, 1168, '<path d="M-3-7H4V-4L-1 0H5V6M-6 0-1 4V7" stroke="#8d6e63" stroke-width="2"/>') +
  poi('E', 946, 637, '<text y="6" font-size="17" font-weight="500" fill="#e53935" text-anchor="middle">H</text>') + poi('E', 1498, 406, '<path d="M-4-4H4V5H-4Z" fill="#8d6e63"/>') +
  poi('A', 33, 68, '<path d="M-3-6V6M3-6V6" stroke="#f5821f" stroke-width="3"/>') +
  `<g transform="translate(${fx} ${fy})"><path d="M0 1V51" stroke="#9c6a35" stroke-width="7"/><path d="M0 2V50" stroke="#c68d4f" stroke-width="3"/><path d="M4 5Q16-1 26 5 32 10 41 3V30Q34 35 27 31 15 24 4 30Z" fill="#8fd400" stroke="#4c9a12" stroke-width="2"/><path d="M27 6V30" stroke="#4c9a12" stroke-width="2"/></g>`;

// Chart
const early = '177,250 180,360 190,360 192,395 195,297 200,360 205,270 210,264 213,415 217,227 222,265 229,235 232,262 236,195 240,255 243,360 248,300 251,297 257,455 262,395 267,455 271,425 276,425 280,493 286,425 289,458 295,458 297,425 304,425 311,395 314,425 322,330 327,300 333,396 341,396 346,300 350,396 355,360 358,396 361,290 367,262 371,360 375,297 379,396 387,360 391,396 398,360 405,455 409,354 419,425 425,396 435,553 441,553 446,410 450,458 455,392 463,440 473,458 475,365 479,553 486,455 490,490 492,455 497,455 506,490 509,420 514,553 517,400 520,455 524,425 528,455 530,427 535,445 539,615 544,548 547,615 548,455 552,585 555,553 558,553 560,493 565,493 568,395 573,490 575,440 584,678 589,410 592,553 597,455 603,455 611,392 614,490 622,452 624,425 627,450 629,410 633,490 639,553 644,553 649,590 656,590 665,493 668,553 673,490 677,553 690,553 692,615 694,553 706,590 711,550 722,550 725,615 728,550 732,585 735,552 740,585 745,457 750,470 754,553 758,550 762,487 765,590 770,560 773,650 776,490 781,490 784,590 792,490 800,620 805,610 808,587 814,587 817,552 825,587 833,587 836,743 844,585 848,620 851,552 855,620 863,620 866,587 870,617 873,575 876,678 881,575 884,612 887,590 890,620 898,648 901,640 904,473 908,617 912,587 922,743 925,617 930,617 937,648 944,617 950,645 954,650 960,678 964,743 967,650 978,620 984,490 990,678 993,583 997,617 1001,587 1008,617 1011,520 1014,587 1019,490 1029,493 1032,457 1038,455 1046,395 1049,455 1060,455 1064,392 1070,553 1077,530 1086,453 1093,550 1099,490 1105,550 1108,550 1111,490 1119,550 1122,455 1138,455 1142,550 1149,615 1152,487 1160,587 1163,550 1168,550 1171,450 1178,550 1181,455 1190,455 1198,490 1202,550 1205,490 1208,550 1219,550 1228,648 1231,480 1239,587 1244,490 1247,550 1250,490 1260,490 1269,553 1279,550 1282,490 1290,490 1295,450 1300,587 1303,455 1317,455 1320,587 1323,435 1328,553 1340,455 1345,424 1350,427 1357,455 1360,617 1363,490 1373,490 1377,617 1383,550 1389,590 1395,548 1398,590 1405,485 1409,650 1414,678 1417,475 1420,617 1425,485 1428,615 1434,587 1440,743 1446,565 1449,743 1454,610 1457,678 1460,580 1463,640 1466,617 1480,618 1485,580 1487,650 1493,678 1496,617 1503,550 1513,680 1520,640 1524,617 1528,648 1534,480 1537,587 1541,587 1544,648 1551,550 1554,617 1557,547 1564,587 1568,560';
const late = '45,550 48,617 50,587 56,587 63,617 68,550 75,617 78,587 82,587 87,490 93,617 96,550 103,587 106,530 109,713 112,617 115,713 118,617 125,713 133,610 136,678 141,648 145,678 149,678 152,617 158,640 165,678 170,650 173,678 176,648 181,678 183,580 186,713 190,617 194,678 205,648 210,713 213,645 218,648 221,678 225,617 229,678 236,650 240,550 243,648 247,617 250,678 254,685 258,713 269,713 272,670 276,655 280,617 282,680 285,617 290,713 294,715 300,580 303,645 307,617 312,617 317,587 319,645 322,487 326,612 329,617 336,585 342,600 346,648 350,610 356,587 358,483 362,617 366,485 369,617 378,587 386,587 389,550 393,575 396,617 399,540 402,585 404,552 412,587 415,550 423,550 426,455 429,455 434,617 437,490 442,490 447,430 453,357 457,400 462,490 465,392 471,395 478,490 481,457 488,470 493,550 497,550 500,440 504,500 511,550 518,552 522,587 524,550 531,590 537,487 543,590 547,590 551,520 554,587 557,520 559,587 561,490 564,587 571,490 579,525 583,455 590,550 593,487 596,523 601,523 608,420 614,490 617,490 620,415 623,520 628,455 633,455 635,403 638,525 641,455 649,520 652,490 659,490 665,520 668,423 672,490 675,440 678,587 682,480 687,455 694,493 699,415 708,550 713,520 718,520 726,457 729,490 733,490 737,425 740,500 746,553 750,457 753,455 757,388 763,550 766,378 770,490 771,455 774,490 777,455 784,455 787,425 795,425 800,520 805,553 808,420 811,520 813,425 821,425 824,520 828,455 831,455 835,420 840,550 845,425 848,455 852,392 858,455 861,390 869,455 875,455 880,553 883,405 888,550 893,393 898,395 902,425 906,425 909,520 912,420 917,455 920,357 928,455 940,457 943,400 946,520 949,375 952,455 956,455 959,520 963,405 967,455 970,390 974,480 979,523 984,455 987,455 993,380 998,357 1002,455 1005,340 1008,395 1023,455 1029,457 1034,393 1037,457 1049,457 1056,425 1061,520 1065,410 1068,520 1073,525 1077,412 1085,520 1088,420 1095,587 1098,435 1101,490 1103,455 1114,455 1117,587 1122,520 1127,522 1132,550 1134,455 1137,550 1140,487 1145,587 1151,520 1154,587 1159,520 1164,587 1170,455 1172,587 1179,520 1182,550 1183,520 1186,552 1196,552 1200,455 1205,587 1212,455 1215,550 1219,550 1222,455 1228,455 1237,587 1241,445 1244,587 1250,550 1253,550 1255,520 1257,550 1259,520 1267,545 1271,648 1275,485 1280,617 1287,550 1294,713 1297,715 1303,583 1311,648 1313,585 1316,650 1321,617 1326,640 1329,745 1331,645 1334,648';
const base = 968, plot = (str, ox, sx) => pairs(str).map(([x, y]) => [((ox + x / sx) * K - 244.5).toFixed(1), (base - (1035 - y) / 3 * K).toFixed(1)]);
const pts = plot(early, 270, 1.3517).concat(plot(late, 1400, 1.3288));
let c = `<defs><linearGradient id="heat" gradientUnits="userSpaceOnUse" x1="0" y1="728" x2="0" y2="885"><stop stop-color="#c4dca8"/><stop offset="1" stop-color="#94dbbc"/></linearGradient></defs>
<rect x="873" y="14" width="70" height="20" fill="#c5b5e8" stroke="#ddd" stroke-width="2"/><text x="953" y="32">PM2.5 value</text>
<text transform="translate(17 507) rotate(-90)" text-anchor="middle">PM2.5 (µg/m)</text><rect x="100" y="51" width="1" height="917" fill="#ddd"/>`;
for (let v = 0; v <= 100; v += 10) {
  const y = Math.round(base - v * 9.17);
  c += `<text x="83" y="${y + 7}" text-anchor="end">${v}</text><rect x="91" y="${y - 1}" width="1867" height="2" fill="#e5e5e5"/>`;
}
c += `<path d="M${pts[0][0]} ${base}L${pts.map(p => p.join(' ')).join('L')}V${base}Z" fill="url(#heat)"/><rect x="91" y="${base - 1}" width="1867" height="2" fill="#acacac"/>`;
['9:02:00 am', '10:42:00 am', '12:22:00 pm', '2:02:00 pm', '3:42:00 pm', '5:22:00 pm', '7:02:00 pm', '8:42:00 pm', '10:22:00 pm', '12:02:00 am']
  .forEach((t, i) => { c += `<text x="${Math.round(100 + i * 199.4)}" y="1004" text-anchor="middle">${t}</text>`; });
document.getElementById('chart').innerHTML = c;
</script>
</body>
</html>
